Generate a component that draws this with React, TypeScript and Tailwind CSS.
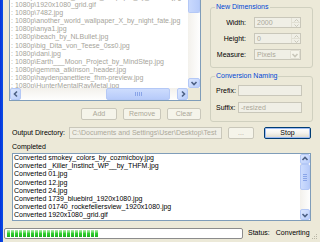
import React from "react";

const queued = [
  "1080p\\1920x1080_abstract_wallpaper_by_kaNoN.jpg",
  "1080p\\1920x1080_grid.gif",
  "1080p\\7482.jpg",
  "1080p\\another_world_wallpaper_X_by_night_fate.jpg",
  "1080p\\anya1.jpg",
  "1080p\\beach_by_NLBullet.jpg",
  "1080p\\big_Dita_von_Teese_0ss0.jpg",
  "1080p\\dani.jpg",
  "1080p\\Earth___Moon_Project_by_MindStep.jpg",
  "1080p\\gemma_atkinson_header.jpg",
  "1080p\\haydenpanettiere_fhm-preview.jpg",
  "1080p\\HunterMentalRayMetal.jpg",
];

const converted = [
  "smokey_colors_by_cozmicboy.jpg",
  "_Killer_Instinct_WP__by_THFM.jpg",
  "01.jpg",
  "12.jpg",
  "24.jpg",
  "1739_bluebird_1920x1080.jpg",
  "01740_rockefellersview_1920x1080.jpg",
  "1920x1080_grid.gif",
];

type Dir = "up" | "down" | "left" | "right";

const chevron: Record<Dir, string> = {
  up: "M1.5 5 L4 2.5 L6.5 5",
  down: "M1.5 3 L4 5.5 L6.5 3",
  left: "M5 1.5 L2.5 4 L5 6.5",
  right: "M3 1.5 L5.5 4 L3 6.5",
};

const Chevron = ({ dir, color = "#4d6185" }: { dir: Dir; color?: string }) => (
  <svg width="8" height="8" viewBox="0 0 8 8">
    <path d={chevron[dir]} fill="none" stroke={color} strokeWidth="1.6" />
  </svg>
);

// xp style scroll arrow button
const ScrollButton = ({ dir, className }: { dir: Dir; className: string }) => (
  <div
    className={`${className} flex items-center justify-center rounded-[2px] border border-[#b4c8f6] bg-linear-to-br from-[#dce7fe] to-[#b9cdfb]`}
  >
    <Chevron dir={dir} />
  </div>
);

const DisabledButton = ({ label, width }: { label: string; width: string }) => (
  <div
    className={`${width} h-[12px] flex items-center justify-center rounded-[2px] border border-[#c9c7ba] bg-[#f5f4ea] text-[#aca899]`}
  >
    {label}
  </div>
);

const DisabledBox = ({
  width,
  text,
  spin,
  combo,
}: {
  width: string;
  text?: string;
  spin?: boolean;
  combo?: boolean;
}) => (
  <div
    className={`${width} h-[11px] flex border border-[#c9c7ba] bg-[#f0efe6] text-[#aca899]`}
  >
    <div className="flex-1 pl-[2px] leading-[9px] overflow-hidden whitespace-nowrap">
      {text}
    </div>
    {spin && (
      <div className="w-[9px] flex flex-col border-l border-[#e2e0d4]">
        <div className="flex-1 flex items-center justify-center border-b border-[#e2e0d4] overflow-hidden">
          <svg width="5" height="3" viewBox="0 0 5 3">
            <path d="M0.5 2.5 L2.5 0.5 L4.5 2.5" fill="none" stroke="#c9c7ba" strokeWidth="1" />
          </svg>
        </div>
        <div className="flex-1 flex items-center justify-center overflow-hidden">
          <svg width="5" height="3" viewBox="0 0 5 3">
            <path d="M0.5 0.5 L2.5 2.5 L4.5 0.5" fill="none" stroke="#c9c7ba" strokeWidth="1" />
          </svg>
        </div>
      </div>
    )}
    {combo && (
      <div className="w-[10px] flex items-center justify-center rounded-[1px] border border-[#e2e0d4] bg-[#f5f4ea]">
        <Chevron dir="down" color="#c9c7ba" />
      </div>
    )}
  </div>
);

const App = () => {
  return (
    <div className="w-[320px] h-[242px] overflow-hidden flex bg-[#ece9d8] font-['Liberation_Sans',Arial,sans-serif] text-[7px] leading-[8px] text-black">
      {/* window frame */}
      <div className="w-[3px] bg-linear-to-r from-[#0831d9] to-[#0a4ee6]" />

      <div className="flex-1 flex flex-col">
        <div className="flex h-[122px]">
          {/* source list + buttons */}
          <div className="ml-[6px] w-[192px] flex flex-col">
            <div className="h-[101px] flex flex-col border-x border-b border-[#7f9db9] bg-white">
              <div className="h-[88px] flex">
                <div className="flex-1 overflow-hidden text-[#a6a49a] whitespace-nowrap">
                  <div className="-mt-[7px] pl-[1px]">
                    {queued.map((f, i) => (
                      <div key={i} className="leading-[8.1px]">
                        : {f}
                      </div>
                    ))}
                  </div>
                </div>
                <div className="w-[12px] flex flex-col bg-linear-to-r from-[#f3f1ec] to-[#fefefe]">
                  <div className="h-[13px] rounded-b-[2px] border-x border-b border-[#b4c8f6] bg-linear-to-r from-[#c9d9fd] to-[#b8ccfa]" />
                  <div className="flex-1" />
                  <ScrollButton dir="down" className="h-[10px]" />
                </div>
              </div>
              <div className="h-[12px] flex">
                <div className="flex-1 flex bg-linear-to-b from-[#f3f1ec] to-[#fefefe]">
                  <ScrollButton dir="left" className="w-[11px]" />
                  <div className="flex-1 flex">
                    <div className="ml-[85px] w-[64px] flex items-center justify-center rounded-[2px] border border-[#b4c8f6] bg-linear-to-b from-[#cddcfd] to-[#b7cbfa]">
                      <div className="flex gap-[1px]">
                        {[0, 1, 2, 3].map((i) => (
                          <div key={i} className="w-[1px] h-[4px] bg-[#8aa5e8]" />
                        ))}
                      </div>
                    </div>
                  </div>
                  <ScrollButton dir="right" className="w-[11px]" />
                </div>
                <div className="w-[12px] bg-[#ece9d8]" />
              </div>
            </div>
            <div className="mt-[7px] flex justify-end gap-[6px]">
              <DisabledButton label="Add" width="w-[36px]" />
              <DisabledButton label="Remove" width="w-[38px]" />
              <DisabledButton label="Clear" width="w-[34px]" />
            </div>
          </div>

          {/* options */}
          <div className="ml-[9px] w-[103px] pt-[3px] flex flex-col">
            <fieldset className="border border-[#d0d0bf] rounded-[3px] pl-[4px] pb-[7px]">
              <legend className="px-[1px] text-[#0046d5] leading-[8px]">New Dimensions</legend>
              <div className="mt-[6px] flex flex-col gap-[5px]">
                {[
                  { label: "Width:", value: "2000", spin: true },
                  { label: "Height:", value: "0", spin: true },
                  { label: "Measure:", value: "Pixels", combo: true },
                ].map((r) => (
                  <div key={r.label} className="flex items-center">
                    <div className="w-[31px] text-right">{r.label}</div>
                    <div className="ml-[8px]">
                      <DisabledBox width="w-[47px]" text={r.value} spin={r.spin} combo={r.combo} />
                    </div>
                  </div>
                ))}
              </div>
            </fieldset>
            <fieldset className="mt-[4px] border border-[#d0d0bf] rounded-[3px] pl-[4px] pb-[8px]">
              <legend className="px-[1px] text-[#0046d5] leading-[8px]">Conversion Naming</legend>
              <div className="mt-[5px] flex flex-col gap-[6px]">
                {[
                  { label: "Prefix:", value: "" },
                  { label: "Suffix:", value: "-resized" },
                ].map((r) => (
                  <div key={r.label} className="flex items-center">
                    <div className="w-[23px] pl-[1px]">{r.label}</div>
                    <DisabledBox width="w-[64px]" text={r.value} />
                  </div>
                ))}
              </div>
            </fieldset>
          </div>
        </div>

        {/* output directory */}
        <div className="mt-[5px] h-[12px] flex items-center">
          <div className="ml-[9px] w-[57px]">Output Directory:</div>
          <div className="w-[153px] h-[12px] border border-[#c9c7ba] bg-[#f0efe6] text-[#aca899] pl-[2px] leading-[10px] whitespace-nowrap overflow-hidden">
            C:\Documents and Settings\User\Desktop\Test
          </div>
          <div className="ml-[6px]">
            <DisabledButton label="..." width="w-[26px]" />
          </div>
          <div className="ml-[10px] w-[47px] h-[12px] flex items-center justify-center rounded-[2px] border border-[#003c74] bg-linear-to-b from-white via-[#f4f3ee] to-[#dcd8c9] shadow-[inset_0_0_0_1px_#9ebcf3]">
            Stop
          </div>
        </div>

        <div className="mt-[4px] ml-[9px]">Completed</div>

        {/* completed list */}
        <div className="mt-[2px] ml-[9px] w-[299px] h-[68px] flex border border-[#7f9db9] bg-white">
          <div className="flex-1 pl-[1px] overflow-hidden whitespace-nowrap">
            {converted.map((f, i) => (
              <div key={i} className="leading-[8.2px]">
                Converted {f}
              </div>
            ))}
          </div>
          <div className="w-[10px] flex flex-col bg-linear-to-r from-[#f3f1ec] to-[#fefefe]">
            <ScrollButton dir="up" className="h-[10px]" />
            <div className="h-[26px] flex items-center justify-center rounded-[2px] border border-[#b4c8f6] bg-linear-to-r from-[#cddcfd] to-[#b7cbfa]">
              <div className="flex flex-col gap-[1px]">
                {[0, 1, 2, 3].map((i) => (
                  <div key={i} className="w-[4px] h-[1px] bg-[#8aa5e8]" />
                ))}
              </div>
            </div>
            <div className="flex-1" />
            <ScrollButton dir="down" className="h-[11px]" />
          </div>
        </div>

        {/* status strip */}
        <div className="mt-[3px] flex-1 flex items-center">
          <div className="ml-[1px] w-[239px] h-[11px] flex items-center rounded-[2px] border border-[#8c8c8c] bg-white px-[2px]">
            <div className="flex gap-[1px]">
              {Array.from({ length: 23 }).map((_, i) => (
                <div
                  key={i}
                  className="w-[3px] h-[7px] bg-linear-to-b from-[#b0f0ac] via-[#2fcf2f] to-[#1fae1f]"
                />
              ))}
            </div>
          </div>
          <div className="ml-[5px]">Status:</div>
          <div className="ml-[6px]">Converting</div>
          <div className="ml-auto mr-[2px] self-end mb-[2px]">
            <svg width="7" height="7" viewBox="0 0 7 7">
              <rect x="5" y="1" width="1" height="1" fill="#b9b6a6" />
              <rect x="3" y="3" width="1" height="1" fill="#b9b6a6" />
              <rect x="5" y="3" width="1" height="1" fill="#b9b6a6" />
              <rect x="1" y="5" width="1" height="1" fill="#b9b6a6" />
              <rect x="3" y="5" width="1" height="1" fill="#b9b6a6" />
              <rect x="5" y="5" width="1" height="1" fill="#b9b6a6" />
            </svg>
          </div>
        </div>
      </div>
    </div>
  );
};

export default App;
